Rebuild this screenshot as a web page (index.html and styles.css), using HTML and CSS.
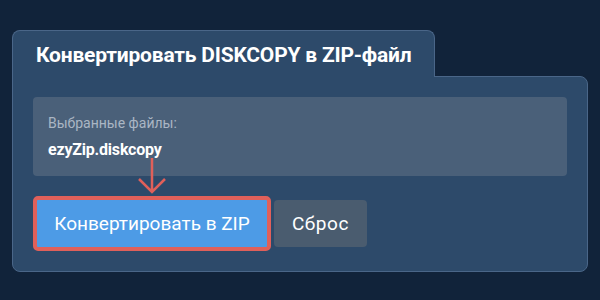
FILE: index.html
```html
<!DOCTYPE html>
<html lang="ru">
<head>
  <meta charset="UTF-8" />
  <meta name="viewport" content="width=device-width, initial-scale=1.0" />
  <title>Конвертировать DISKCOPY в ZIP-файл</title>
  <link rel="stylesheet" href="styles.css">
</head>
<body>
  <div class="card">
    <div class="tab">Конвертировать DISKCOPY в ZIP-файл</div>
    <div class="panel">
      <div class="files">
        <div class="files-label">Выбранные файлы:</div>
        <div class="files-name">ezyZip.diskcopy</div>
      </div>
      <div class="actions">
        <button class="btn convert">Конвертировать в ZIP</button>
        <button class="btn reset">Сброс</button>
        <svg class="arrow" width="30" height="37" viewBox="0 0 30 37">
          <path d="M15 0 L15 34 M2 21 L15 34 L28 21" fill="none" stroke="#e0605a" stroke-width="2.5" />
        </svg>
      </div>
    </div>
  </div>
</body>
</html>
```

FILE: styles.css
```css
body {
  margin: 0;
  background: #11233a;
  font-family: Roboto, 'Noto Sans', sans-serif;
  color: #ffffff;
}

.card {
  margin: 30px 0 0 12px;
  width: 576px;
}

.tab {
  display: inline-block;
  position: relative;
  z-index: 1;
  height: 46px;
  line-height: 48px;
  padding: 0 23px;
  margin-bottom: -1px;
  background: #2d4a6a;
  border: 1px solid #4a6688;
  border-bottom: none;
  border-radius: 8px 8px 0 0;
  font-size: 21px;
  font-weight: bold;
  letter-spacing: -0.2px;
}

.panel {
  background: #2d4a6a;
  border: 1px solid #4a6688;
  border-radius: 0 8px 8px 8px;
  padding: 20px;
}

.files {
  height: 79px;
  box-sizing: border-box;
  padding: 18px 15px 0;
  background: #4a6079;
  border-radius: 4px;
}

.files-label {
  font-size: 14px;
  color: #aab6c4;
  line-height: 16px;
}

.files-name {
  margin-top: 10px;
  font-size: 16px;
  font-weight: bold;
  letter-spacing: -0.2px;
  line-height: 18px;
}

.actions {
  position: relative;
  display: flex;
  align-items: center;
  margin-top: 20px;
  gap: 3px;
}

.btn {
  font-family: Roboto, 'Noto Sans', sans-serif;
  color: #ffffff;
  font-size: 19px;
  border: none;
  cursor: pointer;
}

.convert {
  width: 238px;
  height: 55px;
  background: #4d9be6;
  border: 4px solid #e0605a;
  border-radius: 5px;
}

.reset {
  width: 93px;
  height: 47px;
  background: #4a5c6f;
  border-radius: 4px;
  letter-spacing: 0.6px;
}

.arrow {
  position: absolute;
  left: 104px;
  top: -38px;
}
```
